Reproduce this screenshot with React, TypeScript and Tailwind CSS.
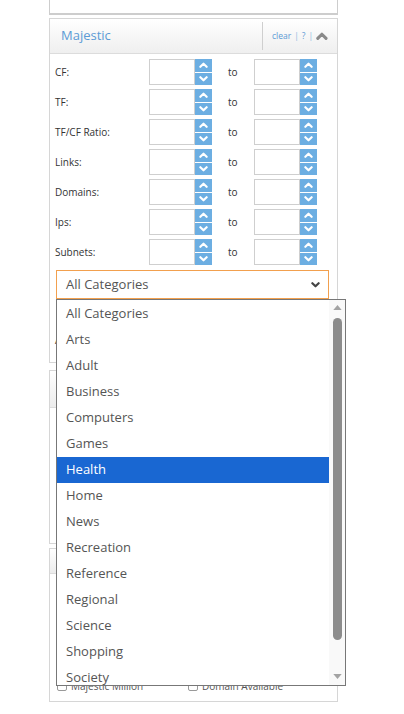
import React from 'react';

const rows = ['CF:', 'TF:', 'TF/CF Ratio:', 'Links:', 'Domains:', 'Ips:', 'Subnets:'];

const categories = [
    'All Categories',
    'Arts',
    'Adult',
    'Business',
    'Computers',
    'Games',
    'Health',
    'Home',
    'News',
    'Recreation',
    'Reference',
    'Regional',
    'Science',
    'Shopping',
    'Society',
];

const Chevron = ({ up, className, w = 2 }: { up?: boolean; className?: string; w?: number }) => (
    <svg viewBox="0 0 10 6" className={className} fill="none" stroke="currentColor" strokeWidth={w} strokeLinecap="round" strokeLinejoin="round">
        {up ? <polyline points="1.5,5 5,1.5 8.5,5" /> : <polyline points="1.5,1 5,4.5 8.5,1" />}
    </svg>
);

const Spinner = () => (
    <div className="flex">
        <div className="w-[46px] h-[26px] border border-[#cfcfcf] bg-white" />
        <div className="flex flex-col w-[17px] h-[26px] gap-px">
            <div className="flex-1 bg-[#6caee2] flex items-center justify-center">
                <Chevron up w={2.4} className="w-[9px] h-[6px] text-white" />
            </div>
            <div className="flex-1 bg-[#6caee2] flex items-center justify-center">
                <Chevron w={2.4} className="w-[9px] h-[6px] text-white" />
            </div>
        </div>
    </div>
);

const App = () => {
    return (
        <div className="relative w-[404px] h-[714px] bg-white overflow-hidden font-['Open_Sans',sans-serif]">
            <div className="ml-[49px] w-[289px] flex flex-col">
                {/* tail of the panel above */}
                <div className="h-[15px] border-x border-b-2 border-[#cdcdcd]" />

                {/* Majestic panel */}
                <div className="mt-[3px] border border-[#d6d6d6] h-[345px]">
                    <div className="h-[35px] flex items-center border-b border-[#dcdcdc] bg-gradient-to-b from-white to-[#efefef]">
                        <span className="pl-[11px] text-[13px] text-[#5b9bd5] flex-1">Majestic</span>
                        <div className="w-[75px] h-[28px] border-l border-[#cfcfcf] flex items-center pl-[9px] pr-[9px] gap-[3px] text-[8.5px] text-[#5b9bd5]">
                            <span>clear</span>
                            <span className="text-[#8db8e0]">|</span>
                            <span>?</span>
                            <span className="text-[#8db8e0]">|</span>
                            <Chevron up w={2.6} className="ml-auto w-[13px] h-[8px] text-[#8a8a8a]" />
                        </div>
                    </div>
                    <div className="pt-[5px] pl-[5px] flex flex-col gap-[4px]">
                        {rows.map((r) => (
                            <div key={r} className="flex items-center h-[26px]">
                                <span className="w-[94px] text-[10px] text-[#333]">{r}</span>
                                <Spinner />
                                <span className="w-[42px] pl-[16px] text-[10px] text-[#333]">to</span>
                                <Spinner />
                            </div>
                        ))}
                    </div>
                    <div className="mt-[5px] ml-[6px] w-[273px] h-[29px] border border-[#f2a04e] flex items-center justify-between pl-[9px] pr-[8px]">
                        <span className="text-[13px] text-[#555]">All Categories</span>
                        <Chevron w={2.4} className="w-[9px] h-[6px] text-[#444]" />
                    </div>
                    <div className="mt-[34px] pl-[5px] text-[10px] text-[#333]">A</div>
                </div>

                {/* next panel */}
                <div className="mt-[7px] border border-[#d6d6d6] h-[174px]">
                    <div className="h-[37px] border-b border-[#dcdcdc] bg-gradient-to-b from-white to-[#ececec]" />
                </div>

                {/* last panel */}
                <div className="mt-[4px] border border-[#d6d6d6] h-[154px] flex flex-col">
                    <div className="h-[25px] border-b border-[#dcdcdc] bg-gradient-to-b from-white to-[#ececec]" />
                    <div className="flex-1" />
                    <div className="flex items-center h-[12px] mb-[9px] text-[10px] text-[#555]">
                        <div className="flex items-center w-[138px] pl-[7px] gap-[4px]">
                            <span className="w-[10px] h-[10px] border border-[#999] rounded-[2px]" />
                            <span>Majestic Million</span>
                        </div>
                        <div className="flex items-center gap-[4px]">
                            <span className="w-[10px] h-[10px] border border-[#999] rounded-[2px]" />
                            <span>Domain Available</span>
                        </div>
                    </div>
                </div>
            </div>

            {/* open dropdown list */}
            <div className="absolute left-[56px] top-[299px] w-[290px] h-[387px] border border-[#777] bg-white flex overflow-hidden">
                <ul className="w-[272px] pt-px flex flex-col">
                    {categories.map((c) => (
                        <li
                            key={c}
                            className={
                                c === 'Health'
                                    ? 'h-[26px] shrink-0 flex items-center pl-[9px] text-[13px] bg-[#1967d2] text-white'
                                    : 'h-[26px] shrink-0 flex items-center pl-[9px] text-[13px] text-[#555]'
                            }
                        >
                            {c}
                        </li>
                    ))}
                </ul>
                <div className="w-[16px] bg-[#f9f9f9] flex flex-col items-center">
                    <svg viewBox="0 0 10 6" className="mt-[5px] w-[9px] h-[5px] text-[#a3a3a3]" fill="currentColor">
                        <polygon points="0,6 5,0 10,6" />
                    </svg>
                    <div className="mt-[8px] w-[9px] h-[322px] rounded-full bg-[#8c8c8c]" />
                    <div className="flex-1" />
                    <svg viewBox="0 0 10 6" className="mb-[6px] w-[9px] h-[5px] text-[#a3a3a3]" fill="currentColor">
                        <polygon points="0,0 10,0 5,6" />
                    </svg>
                </div>
            </div>
        </div>
    );
};

export default App;
